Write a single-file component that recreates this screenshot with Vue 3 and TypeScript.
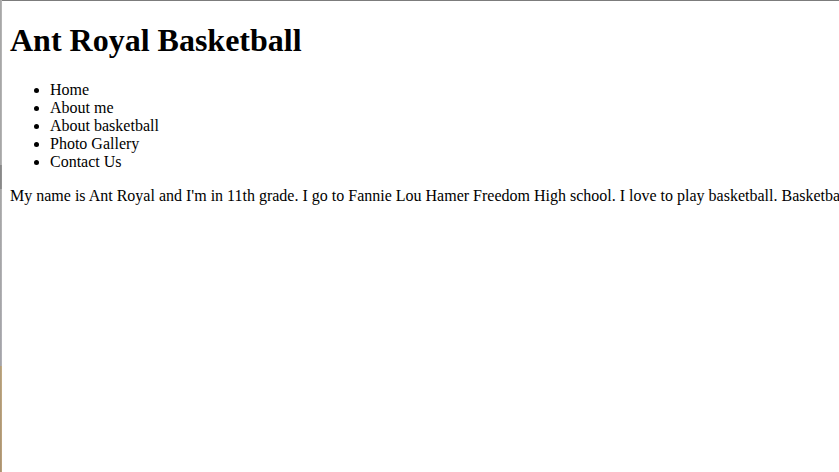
<script setup lang="ts">
const title: string = 'Ant Royal Basketball'
const links: string[] = ['Home', 'About me', 'About basketball', 'Photo Gallery', 'Contact Us']
</script>

<template>
  <div class="page">
    <div class="edge" aria-hidden="true"></div>
    <main class="content">
      <h1>{{ title }}</h1>
      <ul>
        <li v-for="link in links" :key="link">{{ link }}</li>
      </ul>
      <p>My name is Ant Royal and I'm in 11th grade. I go to Fannie Lou Hamer Freedom High school. I love to play basketball. Basketball</p>
    </main>
  </div>
</template>

<style>
body {
  background: #fff;
}
</style>

<style scoped>
.page {
  display: flex;
  min-height: 100vh;
  overflow: hidden;
  color: #000;
  font-family: "Liberation Serif", "Times New Roman", serif;
  font-size: 16px;
  line-height: 18px;
}

.edge {
  flex: none;
  width: 2px;
  background:
    linear-gradient(90deg, rgb(0 0 0 / 7%) 50%, transparent 50%),
    linear-gradient(#b4b4b4 35%, #929292 35%, #929292 40%, #b4b4b4 40%, #b0b0b6 366px, #c0aa84 366px, #b89e7a 100%);
}

.content {
  flex: 1;
  min-width: 0;
  padding: 21px 0 0 8px;
  border-top: 1px solid #7c7c7c;
}

h1 {
  margin: 0 0 22px;
  font-size: 32px;
  line-height: 37px;
}

ul {
  margin: 0 0 16px;
  padding-left: 40px;
}

p {
  margin: 0;
  white-space: nowrap;
}
</style>
